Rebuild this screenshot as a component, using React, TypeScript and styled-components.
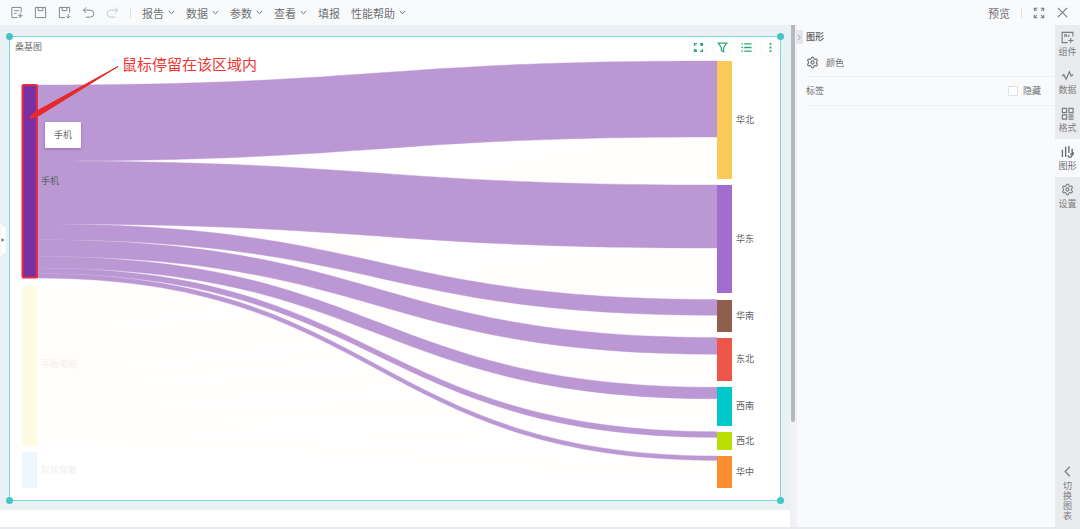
import React from "react";
import styled, { createGlobalStyle, css } from "styled-components";
import { Settings } from "lucide-react";

const GlobalStyle = createGlobalStyle`
  * { box-sizing: border-box; }
  body {
    margin: 0;
    background: #ffffff;
    color: #6a6c70;
    font-family: "Noto Sans CJK SC", "Noto Sans", sans-serif;
    font-size: 9px;
    line-height: 12px;
  }
  button {
    font: inherit;
    color: inherit;
    border: 0;
    padding: 0;
    background: none;
    cursor: pointer;
  }
  svg { display: block; flex: none; }
`;

const Page = styled.div`
  display: flex;
  flex-direction: column;
  min-height: 100vh;
`;

const Toolbar = styled.header`
  display: flex;
  align-items: center;
  justify-content: space-between;
  height: 25px;
  padding: 0 11px 0 10px;
  background: #f9fafb;
`;

const ToolGroup = styled.div`
  display: flex;
  align-items: center;
  gap: 11px;
`;

const IconButton = styled.button<{ $muted?: boolean }>`
  display: grid;
  place-items: center;
  color: ${(p) => (p.$muted ? "#c4c6c9" : "#7c7e82")};
`;

const Divider = styled.span`
  width: 1px;
  height: 11px;
  background: #e0e2e5;
`;

const MenuBar = styled.nav`
  display: flex;
  align-items: center;
  gap: 11px;
`;

const MenuButton = styled.button`
  display: flex;
  align-items: center;
  gap: 4px;
  font-size: 11px;
  line-height: 16px;
  color: #6f7175;
`;

const Body = styled.div`
  display: flex;
  flex: 1;
`;

const Workspace = styled.main`
  position: relative;
  flex: 1;
  min-width: 0;
  background: #ffffff;
`;

const Canvas = styled.div`
  padding: 11px 9px 9px;
  background: #eaf1f5;
`;

const Card = styled.section`
  position: relative;
  border: 1px solid #7fd6dc;
  background: #ffffff;
`;

const Handle = styled.i<{ $v: "top" | "bottom"; $h: "left" | "right" }>`
  position: absolute;
  ${(p) => p.$v}: -4px;
  ${(p) => p.$h}: -4px;
  width: 7px;
  height: 7px;
  border-radius: 50%;
  background: #45c4c8;
`;

const CardHeader = styled.div`
  display: flex;
  align-items: center;
  justify-content: space-between;
  height: 20px;
  padding: 0 2px 0 5px;
`;

const CardTitle = styled.h1`
  margin: 0;
  font-size: 9px;
  line-height: 12px;
  font-weight: 400;
`;

const CardTools = styled.div`
  display: flex;
  gap: 8px;
`;

const CardTool = styled.button`
  display: grid;
  place-items: center;
  width: 16px;
  height: 16px;
  color: #2fa873;
  background: #ffffff;
  box-shadow: 0 0 2px #e2ece8;
`;

const ChartSvg = styled.svg`
  width: 100%;
  height: auto;
  overflow: visible;
`;

const ChartLabel = styled.text<{ $faded?: boolean }>`
  font-size: 9px;
  fill: ${(p) => (p.$faded ? "#f3efef" : "#606266")};
`;

const Note = styled.text`
  font-size: 15px;
  fill: #ee3630;
`;

const Tooltip = styled.div`
  position: absolute;
  left: 35px;
  top: 85px;
  padding: 7px 9px;
  border-radius: 1px;
  background: #ffffff;
  box-shadow: 0 1px 3px rgba(60, 30, 90, 0.35);
`;

const DrawerHandle = styled.button`
  position: absolute;
  left: 0;
  top: 197px;
  width: 7px;
  height: 36px;
`;

const ScrollTrack = styled.div`
  width: 7px;
  padding-left: 1px;
  background: #eff1f4;
`;

const ScrollThumb = styled.div`
  width: 4px;
  height: 79%;
  border-radius: 0 0 2px 2px;
  background: #b2babd;
`;

const Panel = styled.aside`
  position: relative;
  width: 258px;
  padding-left: 9px;
  background: #f9fafc;
`;

const Collapse = styled.button`
  position: absolute;
  left: -1px;
  top: 5px;
  display: grid;
  place-items: center;
  width: 7px;
  height: 14px;
  color: #a5a8ac;
  background: #e4e6e9;
`;

const PanelTitle = styled.h2`
  margin: 0;
  font-size: 9px;
  line-height: 24px;
  font-weight: 500;
  color: #56585c;
`;

const PanelRow = styled.div<{ $kind: "color" | "label" }>`
  display: flex;
  align-items: center;
  gap: 7px;
  border-bottom: 1px solid #f0f1f3;
  ${(p) =>
    p.$kind === "color"
      ? css`height: 28px;`
      : css`
          height: 29px;
          justify-content: space-between;
          padding-right: 14px;
        `}
`;

const CheckLabel = styled.label`
  display: flex;
  align-items: center;
  gap: 5px;
`;

const CheckBox = styled.input`
  appearance: none;
  width: 10px;
  height: 10px;
  margin: 0;
  border: 1px solid #dfe1e5;
  border-radius: 1px;
  background: #ffffff;
  &:checked { background: #3fae7e; }
`;

const Rail = styled.nav`
  display: flex;
  flex-direction: column;
  width: 25px;
  background: #eaebed;
`;

const RailButton = styled.button<{ $active?: boolean }>`
  display: flex;
  flex-direction: column;
  align-items: center;
  justify-content: center;
  gap: 2px;
  height: 38px;
  color: ${(p) => (p.$active ? "#6a6c70" : "#7c7e82")};
  background: ${(p) => (p.$active ? "#f9fafc" : "transparent")};
`;

const SwitchButton = styled.button`
  display: flex;
  flex-direction: column;
  align-items: center;
  gap: 4px;
  width: 9px;
  margin: auto auto 6px;
  line-height: 10px;
  color: #7c7e82;
`;

const BottomLine = styled.footer`
  height: 2px;
  background: #e8e9eb;
`;

type IconProps = { size?: number; children: React.ReactNode; w?: number };
const Icon = ({ size = 13, w = 1, children }: IconProps) => (
  <svg width={size} height={size} viewBox="0 0 14 14" fill="none" stroke="currentColor" strokeWidth={w} aria-hidden="true">
    {children}
  </svg>
);

const Chevron = () => (
  <svg width="7" height="5" viewBox="0 0 7 5" fill="none" stroke="currentColor" aria-hidden="true">
    <path d="M.8 1 3.5 3.7 6.2 1" />
  </svg>
);

const SOURCE_X = 37;
const TARGET_X = 717;

/* Each link: top edge at the source, top edge at the target, thickness. */
const links = [
  [85, 61, 76],
  [161, 185, 63],
  [224, 299.5, 15.8],
  [239.8, 337.5, 16.7],
  [256.5, 387.3, 11.5],
  [268, 431.8, 5.6],
  [273.6, 456, 4.4],
];

const fadedLinks = [
  [286, 137, 40],
  [326, 248, 40],
  [366, 314.5, 15],
  [381, 354.5, 22],
  [403, 399, 20],
  [423, 437, 9],
  [432, 460, 14],
];

const regions = [
  { name: "华北", top: 61, height: 118, color: "#fbcb5a" },
  { name: "华东", top: 185, height: 108, color: "#a36ccf" },
  { name: "华南", top: 300, height: 32, color: "#905e4d" },
  { name: "东北", top: 338, height: 43, color: "#ef5548" },
  { name: "西南", top: 387, height: 39, color: "#02c9c9" },
  { name: "西北", top: 432, height: 18, color: "#b9df04" },
  { name: "华中", top: 456, height: 32, color: "#fe8d30" },
];

function ribbon([s, t, h]: number[]) {
  const mid = (SOURCE_X + TARGET_X) / 2;
  return `M${SOURCE_X} ${s}C${mid} ${s} ${mid} ${t} ${TARGET_X} ${t}V${t + h}C${mid} ${t + h} ${mid} ${s + h} ${SOURCE_X} ${s + h}Z`;
}

const SankeyChart = () => (
  <ChartSvg viewBox="10 57 770 443" role="img" aria-label="桑基图">
    {fadedLinks.map((l) => <path key={l[0]} d={ribbon(l)} fill="#fffefc" />)}
    {links.map((l) => <path key={l[0]} d={ribbon(l)} fill="#bb98d3" stroke="#bb98d3" strokeWidth=".4" />)}
    <rect x="22.500" y="85" width="14.500" height="192.500" fill="#7a30a5" stroke="#ea2c3c" strokeWidth="2" rx="1" />
    <rect x="22" y="286" width="15" height="160" fill="#fdfbe3" />
    <rect x="22" y="452" width="15" height="36" fill="#eef7fd" />
    <ChartLabel x="41" y="184">手机</ChartLabel>
    <ChartLabel x="41" y="367" $faded>平板电脑</ChartLabel>
    <ChartLabel x="41" y="473" $faded>智能穿戴</ChartLabel>
    {regions.map((r) => (
      <g key={r.name}>
        <rect x={TARGET_X} y={r.top} width="15" height={r.height} fill={r.color} />
        <ChartLabel x="736" y={r.top + Math.floor(r.height / 2) + 3}>{r.name}</ChartLabel>
      </g>
    ))}
    <path d="M118 66.500 36 111.500 30 117l1 2 8-3.500z" fill="#e8282a" stroke="#e8282a" strokeWidth="1" strokeLinejoin="round" />
    <Note x="122" y="70">鼠标停留在该区域内</Note>
  </ChartSvg>
);

const menus = ["报告", "数据", "参数", "查看", "填报", "性能帮助"];

export default function App() {
  return (
    <Page>
      <GlobalStyle />
      <Toolbar>
        <ToolGroup>
          <IconButton aria-label="新建"><Icon><path d="M12 7V1.500H2v11h6M4.500 5h5M4.500 8h2.500M11 8v5M8.500 10.500h5" /></Icon></IconButton>
          <IconButton aria-label="保存"><Icon><path d="M1.500 1.500h11v11h-11zM4.500 1.500V5h5V1.500" /></Icon></IconButton>
          <IconButton aria-label="另存为"><Icon><path d="M12.500 7V1.500h-11v11h6M4.500 1.500V5h5V1.500M11 8.500v4.500M9 11l2 2 2-2" /></Icon></IconButton>
          <IconButton aria-label="撤销"><Icon><path d="M4.500 1.500 1.500 4.500l3 3M1.500 4.500H9a3.500 3.500 0 0 1 0 7.500H4" /></Icon></IconButton>
          <IconButton aria-label="重做" $muted><Icon><path d="M9.500 1.500l3 3-3 3M12.500 4.500H5A3.500 3.500 0 0 0 5 12h5" /></Icon></IconButton>
          <Divider />
          <MenuBar>
            {menus.map((m) => (
              <MenuButton key={m}>{m}{m !== "填报" && <Chevron />}</MenuButton>
            ))}
          </MenuBar>
        </ToolGroup>
        <ToolGroup>
          <MenuButton>预览</MenuButton>
          <Divider />
          <IconButton aria-label="全屏"><Icon size={12} w={1.2}><path d="M1.500 5V1.500H5M9 1.500h3.500V5M12.500 9v3.500H9M5 12.500H1.500V9M1.500 1.500l3 3M12.500 1.500l-3 3M12.500 12.500l-3-3M1.500 12.500l3-3" /></Icon></IconButton>
          <IconButton aria-label="关闭"><Icon w={1.3}><path d="M2 2l10 10M12 2 2 12" /></Icon></IconButton>
        </ToolGroup>
      </Toolbar>
      <Body>
        <Workspace>
          <Canvas>
            <Card>
              <CardHeader>
                <CardTitle>桑基图</CardTitle>
                <CardTools>
                  <CardTool aria-label="放大"><Icon size={11} w={1.7}><path d="M2 5V2h3M9 2h3v3M12 9v3H9M5 12H2V9M2 12l2.500-2.500M12 2 9.500 4.500" /></Icon></CardTool>
                  <CardTool aria-label="筛选"><Icon size={11} w={1.5}><path d="M1.500 1.500h11L8.500 7v5.500l-3-1.500V7z" /></Icon></CardTool>
                  <CardTool aria-label="列表"><Icon size={11} w={1.6}><path d="M.5 2.500h2M4 2.500h9.500M.5 7h2M4 7h9.500M.5 11.500h2M4 11.500h9.500" /></Icon></CardTool>
                  <CardTool aria-label="更多"><Icon size={11} w={2.4}><path d="M7 1.200v2.400M7 5.800v2.400M7 10.400v2.400" /></Icon></CardTool>
                </CardTools>
              </CardHeader>
              <SankeyChart />
              <Tooltip role="tooltip">手机</Tooltip>
              <Handle $v="top" $h="left" />
              <Handle $v="top" $h="right" />
              <Handle $v="bottom" $h="left" />
              <Handle $v="bottom" $h="right" />
            </Card>
          </Canvas>
          <DrawerHandle aria-label="展开">
            <svg width="7" height="36" viewBox="0 0 7 36" aria-hidden="true">
              <path d="M0 0 6.500 6v24L0 36z" fill="#fafcfd" stroke="#dfe5e8" strokeWidth=".6" />
              <path d="M1.500 16 4.500 18 1.500 20z" fill="#77797d" />
            </svg>
          </DrawerHandle>
        </Workspace>
        <ScrollTrack><ScrollThumb /></ScrollTrack>
        <Panel>
          <Collapse aria-label="收起"><Icon size={7} w={2}><path d="M4 2l5 5-5 5" /></Icon></Collapse>
          <PanelTitle>图形</PanelTitle>
          <PanelRow $kind="color"><Settings size={13} strokeWidth={2} aria-hidden />颜色</PanelRow>
          <PanelRow $kind="label">
            标签
            <CheckLabel><CheckBox type="checkbox" />隐藏</CheckLabel>
          </PanelRow>
        </Panel>
        <Rail>
          <RailButton><Icon w={1.2}><path d="M12.800 6V1.500H1.200v11h6M4 6.500V4h2v2.500M8.500 4v2.500M10.500 7.500V13M7.800 10.300h5.700" /></Icon>组件</RailButton>
          <RailButton><Icon w={1.3}><path d="M1 8l2-2 2.500 5 3.500-8 2 4.500L13 6" /></Icon>数据</RailButton>
          <RailButton><Icon w={1.3}><path d="M1.500 1.500H6V6H1.500zM8.500 1.500H13V6H8.500zM1.500 8.500H6V13H1.500zM8 8.500h5.500M8 10.700h5.500M8 13h5.500" /></Icon>格式</RailButton>
          <RailButton $active><Icon w={1.5}><path d="M1.500 5v8M5 2v11M8.500 1v7.500M12 4v3.500M7.500 11l1 2h2l3-4-1-1-2.500 2.500" /></Icon>图形</RailButton>
          <RailButton><Settings size={13} strokeWidth={2} aria-hidden />设置</RailButton>
          <SwitchButton><Icon size={11} w={1.6}><path d="M10 1 4 7l6 6" /></Icon>切换图表</SwitchButton>
        </Rail>
      </Body>
      <BottomLine />
    </Page>
  );
}
